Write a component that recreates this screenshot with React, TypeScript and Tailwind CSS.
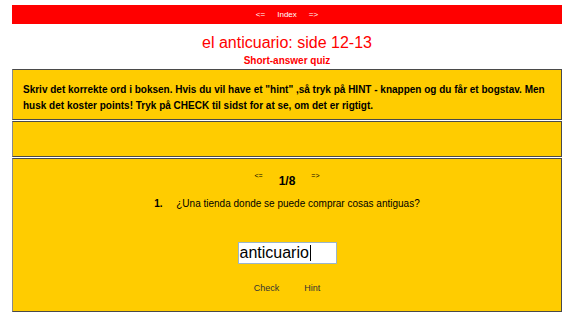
import React from "react";

const arial = { fontFamily: '"Liberation Sans", Arial, sans-serif' };

export default function App() {
  return (
    <div className="w-[574px] h-[322px] bg-white overflow-hidden" style={arial}>
      <div className="pt-[5px] px-[12px]">
        <div className="h-[19px] bg-[#ff0000] flex items-center justify-center gap-[12px] text-white text-[8px] leading-none">
          <span>&lt;=</span>
          <span>Index</span>
          <span>=&gt;</span>
        </div>
        <div className="text-center text-[#ff0000] text-[16px] leading-none mt-[11px]">el anticuario: side 12-13</div>
        <div className="text-center text-[#ff0000] text-[10px] font-bold leading-none mt-[5px]">Short-answer quiz</div>
        <div className="mt-[3px] h-[51px] bg-[#ffcc00] border border-[#4a4a4a] border-l-[#8a8a8a] px-[10px] pt-[12px] text-[10px] font-bold leading-[16px] text-black whitespace-nowrap">
          Skriv det korrekte ord i boksen. Hvis du vil have et "hint" ,så tryk på HINT - knappen og du får et bogstav. Men
          <br />
          husk det koster points! Tryk på CHECK til sidst for at se, om det er rigtigt.
        </div>
        <div className="mt-[1px] h-[36px] bg-[#ffcc00] border border-[#4a4a4a] border-l-[#8a8a8a]" />
        <div className="mt-[1px] h-[154px] bg-[#ffcc00] border border-[#4a4a4a] border-l-[#8a8a8a] flex flex-col items-center">
          <div className="flex items-start gap-[16px] mt-[13px] text-black">
            <span className="text-[7px] leading-none">&lt;=</span>
            <span className="text-[12px] font-bold leading-none mt-[3px]">1/8</span>
            <span className="text-[7px] leading-none">=&gt;</span>
          </div>
          <div className="flex items-center mt-[12px] text-[10px] leading-none text-black">
            <span className="font-bold w-[22px]">1.</span>
            <span>¿Una tienda donde se puede comprar cosas antiguas?</span>
          </div>
          <div className="mt-[33px] w-[99px] h-[22px] bg-white border border-[#9ab5cc] flex items-center px-[1px]">
            <span className="text-[16px] leading-none text-black">anticuario</span>
            <span className="w-px h-[16px] bg-black ml-[1px]" />
          </div>
          <div className="flex gap-[25px] mt-[20px] text-[9px] leading-none text-[#333]">
            <span>Check</span>
            <span>Hint</span>
          </div>
        </div>
      </div>
    </div>
  );
}
